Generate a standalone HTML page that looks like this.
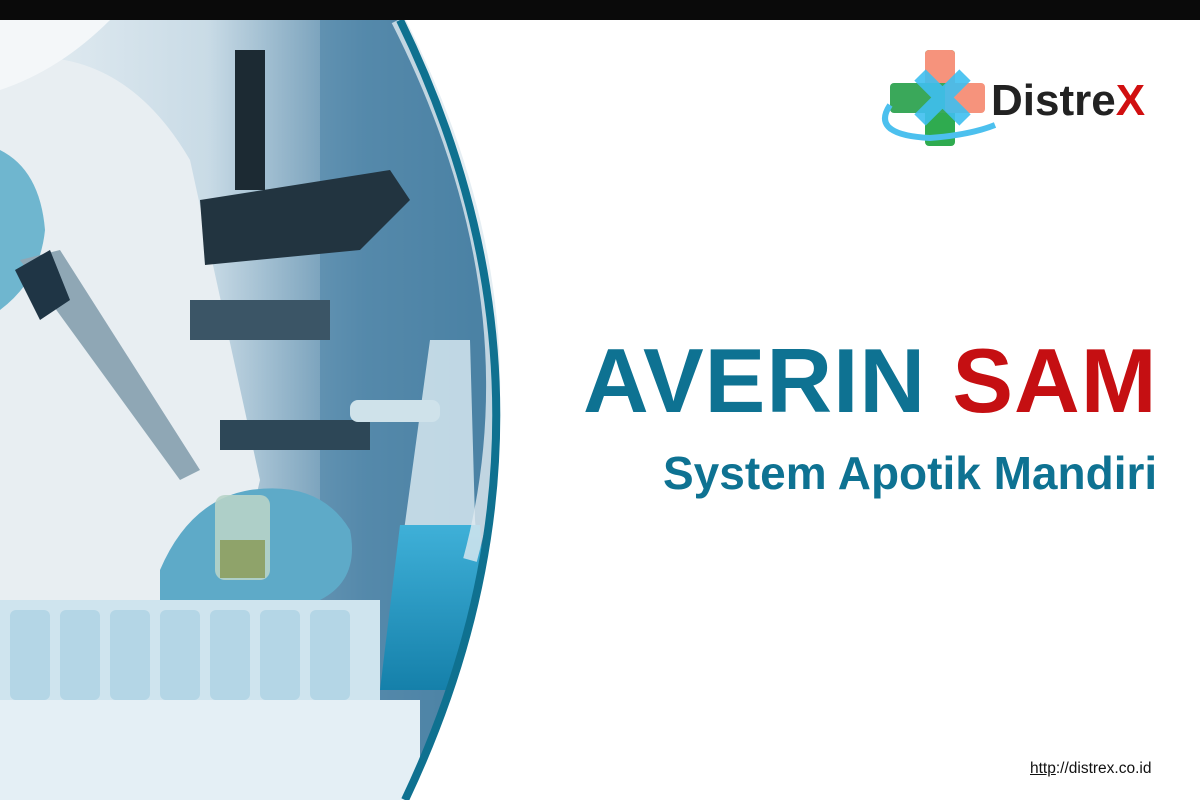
<!DOCTYPE html>
<html><head><meta charset="utf-8"><style>
html,body{margin:0;padding:0;width:1200px;height:800px;overflow:hidden;background:#fff;font-family:"Liberation Sans",Arial,sans-serif}
.t{position:absolute;font-weight:bold;white-space:nowrap;line-height:normal}
</style></head><body>
<svg width="1200" height="800" style="position:absolute;left:0;top:0">
<defs>
<linearGradient id="bg" x1="0" y1="0" x2="1" y2="0">
<stop offset="0" stop-color="#e6eef3"/><stop offset="0.4" stop-color="#c9dbe6"/><stop offset="0.7" stop-color="#5f8fae"/><stop offset="1" stop-color="#3d7699"/>
</linearGradient>
<linearGradient id="liq" x1="0" y1="0" x2="0" y2="1"><stop offset="0" stop-color="#3fb0d8"/><stop offset="1" stop-color="#1580aa"/></linearGradient>
<clipPath id="c"><path d="M0,20 L400,20 Q590,410 405,800 L0,800 Z"/></clipPath>
</defs>
<g clip-path="url(#c)">
<rect x="0" y="20" width="520" height="780" fill="url(#bg)"/>
<rect x="320" y="20" width="200" height="780" fill="#4f86a8" opacity="0.6"/>
<path d="M0,60 Q120,40 190,160 L260,480 L230,610 L0,620 Z" fill="#e8eef2"/>
<path d="M0,20 L110,20 Q60,70 0,90 Z" fill="#f4f7f9"/>
<rect x="235" y="50" width="30" height="140" fill="#1c2a33"/>
<path d="M200,200 L390,170 L410,200 L360,250 L205,265 Z" fill="#223440"/>
<rect x="190" y="300" width="140" height="40" fill="#3b5566"/>
<rect x="220" y="420" width="150" height="30" fill="#2d4757"/>
<path d="M0,150 Q40,170 45,230 Q40,280 0,310 Z" fill="#6fb6cf"/>
<path d="M20,260 L60,250 L200,470 L180,480 Z" fill="#8fa7b5"/>
<path d="M15,270 L50,250 L70,300 L40,320 Z" fill="#1f3545"/>
<path d="M160,570 Q190,500 250,490 Q320,480 350,530 Q360,580 320,600 L160,600 Z" fill="#5eaac8"/>
<rect x="215" y="495" width="55" height="85" rx="10" fill="#b7d3c8" opacity="0.9"/>
<rect x="220" y="540" width="45" height="38" fill="#8fa36a"/>
<path d="M430,340 L470,340 L475,520 L490,690 L390,690 L400,560 Z" fill="#d5e6ee" opacity="0.85"/>
<rect x="350" y="400" width="90" height="22" rx="8" fill="#cfe2ea"/>
<path d="M400,525 L480,525 L490,690 L380,690 Z" fill="url(#liq)"/>
<rect x="0" y="600" width="380" height="200" fill="#cfe4ee"/>
<g fill="#b4d6e6">
<rect x="10" y="610" width="40" height="90" rx="6"/><rect x="60" y="610" width="40" height="90" rx="6"/><rect x="110" y="610" width="40" height="90" rx="6"/><rect x="160" y="610" width="40" height="90" rx="6"/><rect x="210" y="610" width="40" height="90" rx="6"/><rect x="260" y="610" width="40" height="90" rx="6"/><rect x="310" y="610" width="40" height="90" rx="6"/>
</g>
<rect x="0" y="700" width="420" height="100" fill="#e4eff5"/>
</g>
<path d="M398,20 Q540,300 470,560" fill="none" stroke="#dfeaf0" stroke-width="14" opacity="0.8"/>
<path d="M400,20 Q590,410 405,800" fill="none" stroke="#0f7190" stroke-width="8"/>
<rect x="0" y="0" width="1200" height="20" fill="#0a0a0a"/>
<rect x="925" y="50" width="30" height="96" rx="4" fill="#2fab4f"/>
<rect x="925" y="50" width="30" height="50" rx="4" fill="#f6937c"/>
<rect x="890" y="83" width="60" height="30" rx="4" fill="#3aa85a"/>
<rect x="945" y="83" width="40" height="30" rx="4" fill="#f6937c"/>
<path d="M920,75 L965,120 M965,75 L920,120" stroke="#3fbff0" stroke-width="16" opacity="0.9"/>
<path d="M890,105 Q870,135 930,138 Q970,135 995,125" fill="none" stroke="#4cc0ee" stroke-width="6"/>
</svg>
<div class="t" style="left:991px;top:76px;font-size:44px;color:#222">Distre<span style="color:#d10f10">X</span></div>
<div class="t" style="left:583px;top:330px;font-size:91px;color:#0e7292;letter-spacing:1px">AVERIN <span style="color:#c50f12">SAM</span></div>
<div class="t" style="left:663px;top:446px;font-size:46px;color:#0e7292">System Apotik Mandiri</div>
<div style="position:absolute;left:1030px;top:760px;font-size:15.5px;color:#111"><u>http</u>://distrex.co.id</div>
</body></html>
